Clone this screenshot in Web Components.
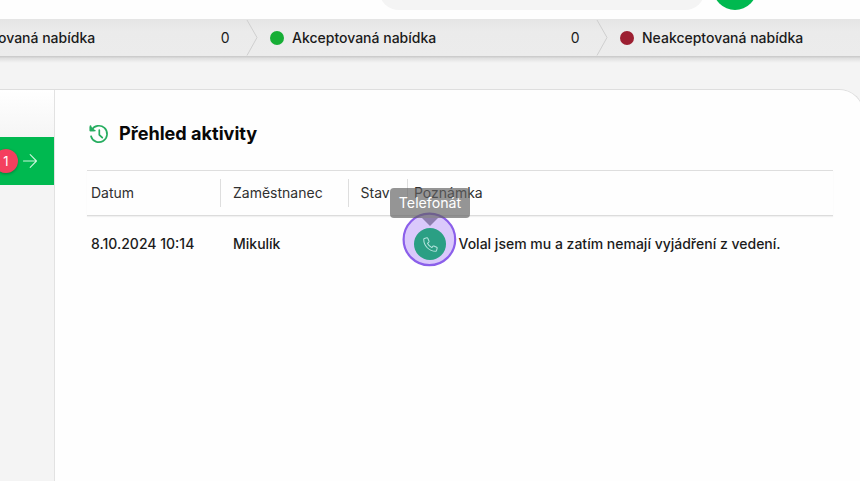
<!DOCTYPE html>
<html lang="cs">
<head>
<meta charset="utf-8">
<title>Přehled aktivity</title>
<style>
    body {
        margin: 0;
        height: 481px;
        overflow: hidden;
        background: #f4f4f4;
        color: #1b1b1b;
        font: 400 14px/20px Inter, "Liberation Sans", sans-serif;
    }
</style>
</head>
<body>
<crm-app></crm-app>

<script>
class TopBar extends HTMLElement {
    constructor() {
        super();
        this.attachShadow({mode: 'open'});
        this.shadowRoot.innerHTML = `
            <style>
                :host {
                    display: flex;
                    align-items: flex-end;
                    gap: 8px;
                    height: 19px;
                    padding-left: 379px;
                    box-sizing: border-box;
                    background: #fefefe;
                    overflow: hidden;
                }

                .search {
                    width: 326px;
                    height: 40px;
                    margin-bottom: 9px;
                    border-radius: 20px;
                    background: #f4f4f4;
                }

                .add {
                    width: 44px;
                    height: 44px;
                    margin-bottom: 9px;
                    border-radius: 50%;
                    background: #00b950;
                }
            </style>
            <div class="search"></div>
            <div class="add"></div>
        `;
    }
}

class StageBar extends HTMLElement {
    constructor() {
        super();
        this.attachShadow({mode: 'open'});
        this.shadowRoot.innerHTML = `
            <style>
                :host {
                    display: flex;
                    position: relative; /* keeps the shadow over the workspace */
                    height: 37px;
                    background: linear-gradient(#e5e5e5, #ebebeb 35%, #ececec);
                }

                :host::after {
                    content: "";
                    position: absolute;
                    left: 0;
                    right: 0;
                    top: 100%;
                    height: 7px;
                    background: linear-gradient(rgba(0, 0, 0, .19), rgba(0, 0, 0, .08) 35%, transparent);
                }
            </style>
            <slot></slot>
        `;
    }
}

class StageItem extends HTMLElement {
    constructor() {
        super();
        this.attachShadow({mode: 'open'});
        this.shadowRoot.innerHTML = `
            <style>
                :host {
                    display: flex;
                    align-items: center;
                    flex: none;
                    width: 350px;
                    box-sizing: border-box;
                    font-weight: 500;
                    white-space: nowrap;
                }

                /* scrolled partly out on the left */
                :host([cut]) {
                    width: 258px;
                }

                :host([cut]) .dot {
                    display: none;
                }

                :host([cut]) .label {
                    margin-left: -2px;
                }

                :host([last]) {
                    flex: 1;
                }

                :host([last]) .count,
                :host([last]) svg {
                    display: none;
                }

                .dot {
                    width: 14px;
                    height: 14px;
                    margin: 0 8px 0 12px;
                    border-radius: 50%;
                    background: var(--dot);
                }

                .label {
                    flex: 1;
                }

                .count {
                    margin-right: 16.5px;
                    font-weight: 400;
                }

                svg {
                    display: block;
                    width: 12px;
                    height: 37px;
                }
            </style>
            <span class="dot"></span>
            <span class="label"><slot></slot></span>
            <span class="count"></span>
            <svg viewBox="0 0 12 37" fill="none" stroke="#cfcfcf"><path d="M1 1 11 18.5 1 36.5"/></svg>
        `;
    }

    connectedCallback() {
        this.shadowRoot.querySelector('.count').textContent = this.getAttribute('count') || '';
    }
}

class SideTabs extends HTMLElement {
    constructor() {
        super();
        this.attachShadow({mode: 'open'});
        this.shadowRoot.innerHTML = `
            <style>
                :host {
                    display: block;
                    flex: none;
                    width: 54px;
                    border-right: 1px solid #e2e2e2;
                    overflow: hidden;
                }

                .top {
                    height: 47px;
                    background: linear-gradient(#fff, #f5f5f5);
                }

                .active {
                    display: flex;
                    align-items: center;
                    gap: 5px;
                    height: 48px;
                    background: #00b950;
                }

                .badge {
                    flex: none;
                    width: 24px;
                    height: 24px;
                    margin-left: -6px;
                    border-radius: 50%;
                    background: #f43f5e;
                    box-shadow: 0 1px 3px rgba(0, 0, 0, .3);
                    color: #fff;
                    font: 400 13px/24px Inter, sans-serif;
                    text-align: center;
                }
            </style>
            <div class="top"></div>
            <div class="active">
                <span class="badge">1</span>
                <svg width="14" height="14" viewBox="0 0 14 14" fill="none" stroke="#c9f5db" stroke-width="1.1" stroke-linecap="round" stroke-linejoin="round"><path d="M.5 7h13M7.2.7 13.5 7l-6.3 6.3"/></svg>
            </div>
        `;
    }
}

class ActivityPanel extends HTMLElement {
    constructor() {
        super();
        this.attachShadow({mode: 'open'});
        this.shadowRoot.innerHTML = `
            <style>
                :host {
                    display: block;
                    flex: 1;
                    padding: 32px 28px 0 32px;
                    background: #fefefe;
                }

                header {
                    display: flex;
                    align-items: center;
                    gap: 9px;
                    height: 24px;
                    padding-left: 2px;
                    margin-bottom: 24px;
                }

                h2 {
                    margin: 0;
                    color: #080808;
                    font-size: 18.1px;
                    font-weight: 700;
                    line-height: 22px;
                    padding-bottom: 2px;
                }
            </style>
            <header>
                <svg width="21" height="21" viewBox="0 0 21 21" fill="none" stroke="#27ad60" stroke-width="1.7" stroke-linecap="round" stroke-linejoin="round"><path d="M2.6 6.2A8.2 8.2 0 1 1 2 12.2M1.5 2.2v4.3H5.8M10.3 6v4.8l3 2.9"/><path d="M1.5 3.2v3.3h3.3Z" fill="#27ad60"/></svg>
                <h2><slot name="title"></slot></h2>
            </header>
            <slot></slot>
        `;
    }
}

class ActivityTable extends HTMLElement {
    constructor() {
        super();
        this.attachShadow({mode: 'open'});
        this.shadowRoot.innerHTML = `
            <style>
                :host {
                    display: block;
                    width: 746px;
                }

                .row {
                    display: grid;
                    align-items: center;
                }

                .head {
                    grid-template-columns: 133px 128px 59px 1fr;
                    height: 44px;
                    border-top: 1px solid #dedede;
                    border-bottom: 1px solid #dcdcdc;
                    box-shadow: 0 1px 1px rgba(0, 0, 0, .05);
                    color: #303030;
                }

                .head span {
                    height: 28px;
                    padding-left: 12px;
                    border-left: 1px solid #dedede;
                    box-sizing: border-box;
                    line-height: 27px;
                }

                .head span:first-child {
                    padding-left: 4px;
                    border-left: 0;
                }

                .head span:nth-child(3) {
                    padding-left: 11.5px;
                }

                .head span:last-child {
                    padding-left: 6px;
                }

                .body {
                    grid-template-columns: 134px 128px 65px 1fr;
                    height: 56px;
                    font-weight: 500;
                }

                .body span {
                    padding-left: 12px;
                    white-space: nowrap;
                }

                .body span:first-child {
                    padding-left: 4px;
                }

                .note {
                    display: flex;
                    align-items: center;
                    gap: 12.5px;
                }

                .note span:last-child {
                    padding: 0;
                }
            </style>
            <div class="row head"><span>Datum</span><span>Zaměstnanec</span><span>Stav</span><span>Poznámka</span></div>
            <div class="row body">
                <span>8.10.2024 10:14</span>
                <span>Mikulík</span>
                <i></i>
                <div class="note"><call-badge tip="Telefonát"></call-badge><span>Volal jsem mu a zatím nemají vyjádření z vedení.</span></div>
            </div>
        `;
    }
}

class CallBadge extends HTMLElement {
    constructor() {
        super();
        this.attachShadow({mode: 'open'});
        this.shadowRoot.innerHTML = `
            <style>
                :host {
                    display: block;
                    position: relative;
                    width: 32px;
                    height: 32px;
                }

                .disc {
                    display: flex;
                    align-items: center;
                    justify-content: center;
                    position: relative;
                    width: 32px;
                    height: 32px;
                    border-radius: 50%;
                    background: #2b9f84;
                }

                /* pointer highlight */
                .ring {
                    position: absolute;
                    left: -12px;
                    top: -16px;
                    width: 55px;
                    height: 55px;
                }

                .tip {
                    position: absolute;
                    left: -24px;
                    top: -40px;
                    width: 80px;
                    height: 30px;
                    border-radius: 4px;
                    background: rgba(97, 97, 97, .67);
                    color: #fff;
                    font-size: 14.2px;
                    font-weight: 400;
                    line-height: 29px;
                    text-align: center;
                }

                .tip::after {
                    content: "";
                    position: absolute;
                    left: 32px;
                    top: 30px;
                    border: 8px solid transparent;
                    border-top-color: rgba(97, 83, 126, .63);
                    border-bottom: 0;
                }
            </style>
            <svg class="ring" viewBox="0 0 55 55"><circle cx="27.4" cy="27.4" r="25.8" fill="#dac9fb" stroke="#8b5fea" stroke-width="2.2"/></svg>
            <div class="disc">
                <svg width="15" height="15" viewBox="0 0 16 16" fill="none" stroke="#b5e4de" stroke-width="1.1" stroke-linejoin="round"><path d="M1.4 1.5 4.2.9Q4.8.8 5.1 1.4L6.4 4.5Q6.6 5 6.2 5.4L4.7 6.7Q6.3 9.8 9.4 11.3L10.7 9.8Q11.1 9.4 11.6 9.6L14.6 10.9Q15.2 11.2 15.1 11.8L14.4 14.6Q14.2 15.2 13.6 15.2C6.5 15.2.8 9.5.8 2.4Q.8 1.7 1.4 1.5Z"/></svg>
            </div>
            <div class="tip"></div>
        `;
    }

    connectedCallback() {
        this.shadowRoot.querySelector('.tip').textContent = this.getAttribute('tip');
    }
}

class CrmApp extends HTMLElement {
    constructor() {
        super();
        this.attachShadow({mode: 'open'});
        this.shadowRoot.innerHTML = `
            <style>
                :host {
                    display: flex;
                    flex-direction: column;
                    width: 860px;
                    height: 481px;
                    overflow: hidden;
                }

                .card {
                    display: flex;
                    flex: 1;
                    margin-top: 33px;
                    margin-right: -4px;
                    border-top: 1px solid #dedede;
                    border-right: 1px solid #dedede;
                    border-top-right-radius: 25px;
                    overflow: hidden;
                }
            </style>
            <top-bar></top-bar>
            <stage-bar>
                <stage-item cut count="0">ovaná nabídka</stage-item>
                <stage-item count="0" style="--dot: #16ae35">Akceptovaná nabídka</stage-item>
                <stage-item last style="--dot: #9c1f31">Neakceptovaná nabídka</stage-item>
            </stage-bar>
            <div class="card">
                <side-tabs></side-tabs>
                <activity-panel>
                    <span slot="title">Přehled aktivity</span>
                    <activity-table></activity-table>
                </activity-panel>
            </div>
        `;
    }
}

customElements.define('top-bar', TopBar);
customElements.define('stage-bar', StageBar);
customElements.define('stage-item', StageItem);
customElements.define('side-tabs', SideTabs);
customElements.define('activity-panel', ActivityPanel);
customElements.define('call-badge', CallBadge);
customElements.define('activity-table', ActivityTable);
customElements.define('crm-app', CrmApp);
</script>
</body>
</html>
